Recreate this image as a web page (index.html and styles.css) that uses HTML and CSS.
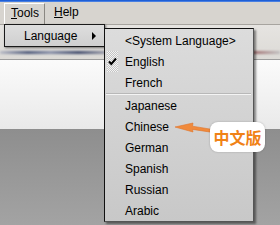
FILE: index.html
```html
<!DOCTYPE html>
<html lang="en">
  <head>
    <meta charset="UTF-8" />
    <meta name="viewport" content="width=device-width, initial-scale=1.0" />
    <title>Tools menu</title>
    <link rel="stylesheet" href="styles.css">
  </head>
  <body>
    <div class="titlebar"></div>
    <div class="menubar">
      <span class="menubar-item open"><u>T</u>ools</span>
      <span class="menubar-item"><u>H</u>elp</span>
    </div>
    <div class="toolbar">
      <div class="toolbar-strip"></div>
    </div>
    <div class="page"></div>
    <div class="desk"></div>

    <div class="submenu">
      <span>Language</span>
      <span class="arrow"></span>
    </div>

    <ul class="menu">
      <li>&lt;System Language&gt;</li>
      <li class="checked">
        <span class="check">
          <svg width="11" height="21" viewBox="0 0 11 21">
            <path d="M2 10.5 L4.3 13 L9 7.5" fill="none" stroke="#000" stroke-width="2" />
          </svg>
        </span>
        English
      </li>
      <li>French</li>
      <li class="separator"></li>
      <li>Japanese</li>
      <li>Chinese</li>
      <li>German</li>
      <li>Spanish</li>
      <li>Russian</li>
      <li>Arabic</li>
    </ul>

    <svg class="callout-arrow" width="42" height="18" viewBox="0 0 42 18">
      <polygon points="3,9 21,5 20.5,8.2 39,11.2 39,14.2 20.5,11.4 21,14" fill="#f08a3c" stroke="#e0732a" stroke-width="0.6" />
    </svg>
    <div class="callout">中文版</div>
  </body>
</html>
```

FILE: styles.css
```css
body {
  margin: 0;
  width: 280px;
  height: 225px;
  overflow: hidden;
  font-family: "Liberation Sans", Arial, sans-serif;
  font-size: 12px;
  color: #000;
  position: relative;
}

.titlebar {
  height: 2px;
  background: linear-gradient(#0a4fd0, #5d8fe8);
}

.menubar {
  height: 22px;
  display: flex;
  align-items: center;
  gap: 3px;
  padding-left: 4px;
  background-color: #d7d4cf;
  border-bottom: 1px solid #a7a49f;
}

.menubar-item {
  padding: 2px 5px 3px 6px;
  line-height: 15px;
}

.menubar-item.open {
  border-top: 1px solid #fff;
  border-left: 1px solid #fff;
  border-right: 1px solid #8a8782;
}

.toolbar {
  height: 35px;
  background: linear-gradient(#e6e4e1, #dcdad6);
  border-bottom: 1px solid #9c9c9c;
  display: flex;
  align-items: flex-end;
  padding-bottom: 5px;
  box-sizing: border-box;
}

.toolbar-strip {
  width: 100%;
  height: 3px;
  background: linear-gradient(90deg, #b9bcc6 0, #4c5878 10%, #8890a8 18%, #3f4a6a 28%, #b0b0b8 40%, #7a6a60 60%, #a8a8a8 75%, #904040 85%, #c0c0c0 100%);
  filter: blur(1px);
}

.page {
  height: 69px;
  background: linear-gradient(#fbfbfb, #e9e9e9);
}

.desk {
  height: 100px;
  background: linear-gradient(#8e8e8e, #a4a4a4);
}

.submenu {
  position: absolute;
  left: 4px;
  top: 24px;
  width: 101px;
  height: 23px;
  box-sizing: border-box;
  border: 1px solid #1a1a1a;
  background: linear-gradient(#dedede, #cfcfcf);
  box-shadow: 1px 1px 2px rgba(0, 0, 0, 0.5);
  display: flex;
  align-items: center;
  justify-content: space-between;
  padding: 0 8px 0 19px;
}

.arrow {
  width: 0;
  height: 0;
  border-top: 4px solid transparent;
  border-bottom: 4px solid transparent;
  border-left: 4px solid #000;
}

.menu {
  position: absolute;
  left: 104px;
  top: 28px;
  width: 150px;
  margin: 0;
  padding: 1px 0 0;
  list-style: none;
  box-sizing: border-box;
  border: 1px solid #111;
  border-right-color: #555;
  border-bottom-color: #555;
  background: linear-gradient(#dcdcdc, #c8c8c8);
  box-shadow: 2px 2px 2px rgba(0, 0, 0, 0.45);
}

.menu li {
  height: 21px;
  line-height: 22px;
  padding-left: 20px;
  position: relative;
}

.menu .separator {
  height: 2px;
  margin: 0 2px 0 1px;
  padding: 0;
  background: linear-gradient(#b8b8b8 50%, #f4f4f4 50%);
}

.check {
  position: absolute;
  left: 2px;
  top: 0;
  width: 11px;
  height: 21px;
  background-color: #fff;
  background-image: repeating-conic-gradient(#c4c4c4 0 25%, #f4f4f4 0 50%);
  background-size: 2px 2px;
}

.check svg {
  display: block;
}

.callout-arrow {
  position: absolute;
  left: 172px;
  top: 118px;
}

.callout {
  position: absolute;
  left: 210px;
  top: 122px;
  width: 55px;
  height: 30px;
  box-sizing: border-box;
  background-color: #fff;
  border-radius: 8px;
  box-shadow: 0 0 2px rgba(0, 0, 0, 0.25);
  color: #f08216;
  font-family: "Noto Sans CJK SC", sans-serif;
  font-weight: bold;
  font-size: 16px;
  line-height: 30px;
  text-align: center;
}
```
